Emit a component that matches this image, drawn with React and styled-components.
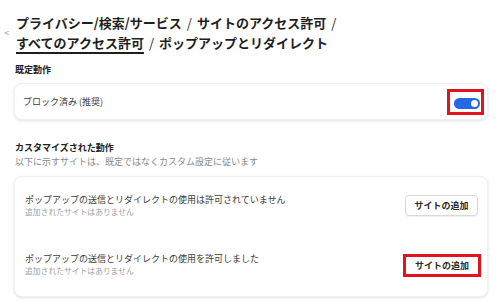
import styled, { createGlobalStyle } from 'styled-components';

const GlobalStyle = createGlobalStyle`
  html, body {
    margin: 0;
    padding: 0;
    background: #ffffff;
  }
  body {
    font-family: "Noto Sans CJK JP", "Noto Sans", sans-serif;
    color: #1f1f1f;
  }
`;

const Page = styled.div`
  width: 500px;
  height: 302px;
  box-sizing: border-box;
  padding: 13px 12px 0 14px;
  overflow: hidden;
`;

const Header = styled.div`
  display: flex;
  align-items: center;
  margin-left: -12px;
`;

const Back = styled.span`
  width: 14px;
  flex: none;
  color: #9a9a9a;
  font-size: 9px;
  line-height: 1;
  text-align: left;
  padding-left: 2px;
  box-sizing: border-box;
`;

const Title = styled.h1`
  margin: 0;
  font-size: 13px;
  font-weight: 700;
  line-height: 19.5px;
  color: #1f1f1f;
`;

const Crumb = styled.span`
  text-decoration: ${({ $current }) => ($current ? 'underline' : 'none')};
  text-decoration-thickness: 1.5px;
  text-underline-offset: 4px;
`;

const Sep = styled.span`
  margin: 0 5px;
  font-weight: 400;
`;

const Section = styled.section`
  margin-top: ${({ $gap }) => $gap}px;
`;

const Label = styled.h2`
  margin: 0 0 0 1px;
  font-size: 9px;
  font-weight: 700;
  line-height: 14px;
  color: #202020;
`;

const Hint = styled.p`
  margin: 0 0 0 1px;
  font-size: 9px;
  line-height: 14px;
  color: #8a8a8a;
`;

const Card = styled.div`
  margin-top: ${({ $gap }) => $gap}px;
  background: #fff;
  border: 1px solid #f1f1f1;
  border-radius: 8px;
  box-shadow: 0 1px 3px rgba(0, 0, 0, 0.12);
`;

const Row = styled.div`
  display: flex;
  align-items: center;
  justify-content: space-between;
  height: ${({ $h }) => $h}px;
  padding: 0 ${({ $pr }) => $pr}px 0 ${({ $pl }) => $pl}px;
`;

const RowText = styled.div`
  display: flex;
  flex-direction: column;
`;

const RowTitle = styled.span`
  font-size: 9px;
  line-height: 12px;
  color: #3c3c3c;
`;

const RowSub = styled.span`
  font-size: 7.8px;
  line-height: 12px;
  color: #a0a0a0;
`;

const Highlight = styled.div`
  border: 3px solid #e3131d;
  padding: ${({ $pad }) => $pad};
  display: flex;
  align-items: center;
`;

const Track = styled.div`
  position: relative;
  width: 26px;
  height: 11px;
  border-radius: 6px;
  background: #2369e6;
`;

const Knob = styled.div`
  position: absolute;
  right: 2px;
  top: 2px;
  width: 7px;
  height: 7px;
  border-radius: 50%;
  background: #fff;
`;

const Button = styled.button`
  font-family: "Noto Sans CJK JP", "Noto Sans", sans-serif;
  font-size: 9px;
  font-weight: 700;
  color: #2a2a2a;
  background: #fff;
  height: ${({ $flagged }) => ($flagged ? '17px' : '21px')};
  width: ${({ $flagged }) => ($flagged ? '72px' : '73px')};
  padding: 0;
  border: ${({ $flagged }) => ($flagged ? 'none' : '1px solid #d9d9d9')};
  border-radius: 4px;
  box-shadow: ${({ $flagged }) => ($flagged ? 'none' : '0 1px 1px rgba(0,0,0,0.06)')};
`;

const rules = [
  { title: 'ポップアップの送信とリダイレクトの使用は許可されていません', flagged: false },
  { title: 'ポップアップの送信とリダイレクトの使用を許可しました', flagged: true },
];

export default function App() {
  return (
    <Page>
      <GlobalStyle />
      <Header>
        <Back>&lt;</Back>
        <Title>
          <Crumb>プライバシー/検索/サービス</Crumb>
          <Sep>/</Sep>
          <Crumb>サイトのアクセス許可</Crumb>
          <Sep>/</Sep>
          <br />
          <Crumb $current>すべてのアクセス許可</Crumb>
          <Sep>/</Sep>
          <Crumb>ポップアップとリダイレクト</Crumb>
        </Title>
      </Header>

      <Section $gap={11}>
        <Label>既定動作</Label>
        <Card $gap={6}>
          <Row $h={35} $pl={8} $pr={3}>
            <RowTitle>ブロック済み (推奨)</RowTitle>
            <Highlight $pad="6px 1px 3px 4px">
              <Track>
                <Knob />
              </Track>
            </Highlight>
          </Row>
        </Card>
      </Section>

      <Section $gap={21}>
        <Label>カスタマイズされた動作</Label>
        <Hint>以下に示すサイトは、既定ではなくカスタム設定に従います</Hint>
        <Card $gap={7}>
          {rules.map((r, i) => (
            <Row key={i} $h={i === 0 ? 57 : 62} $pl={10} $pr={i === 0 ? 9 : 6}>
              <RowText>
                <RowTitle>{r.title}</RowTitle>
                <RowSub>追加されたサイトはありません</RowSub>
              </RowText>
              {r.flagged ? (
                <Highlight $pad="0">
                  <Button $flagged>サイトの追加</Button>
                </Highlight>
              ) : (
                <Button>サイトの追加</Button>
              )}
            </Row>
          ))}
        </Card>
      </Section>
    </Page>
  );
}
